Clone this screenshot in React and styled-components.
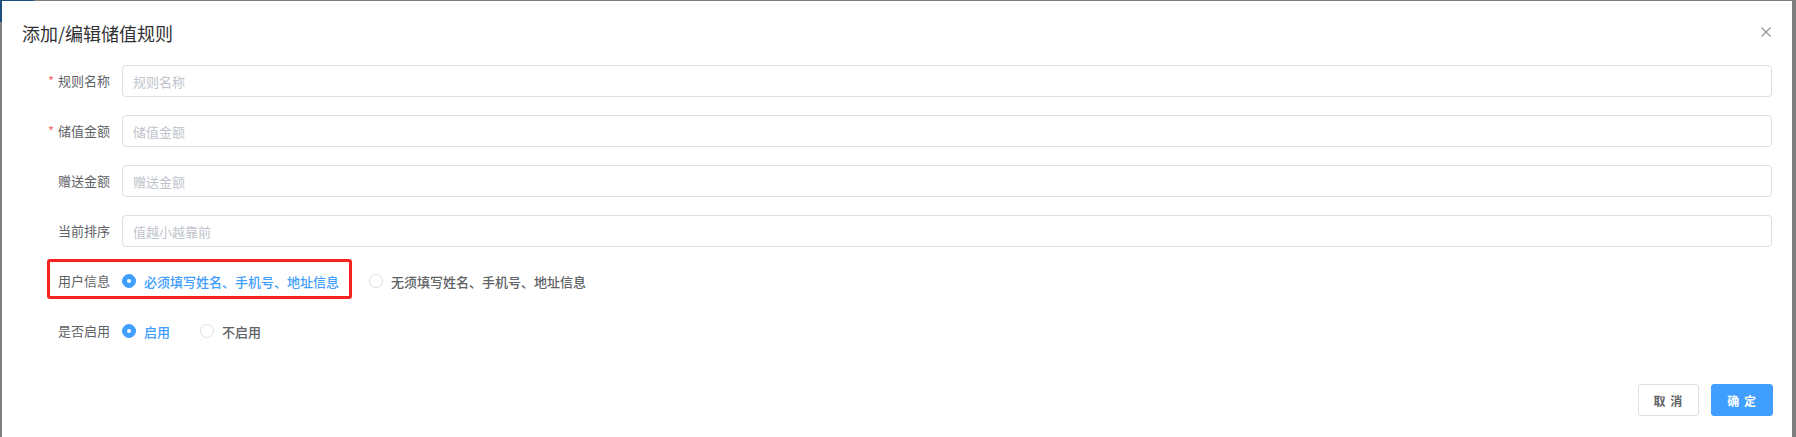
import React from "react";
import styled, { createGlobalStyle, css } from "styled-components";

const GlobalStyle = createGlobalStyle`
  html, body {
    margin: 0;
    padding: 0;
    background: #7f7f7f;
  }
  * { box-sizing: border-box; }
  body {
    font-family: "Noto Sans CJK SC", "Noto Sans", "Liberation Sans", sans-serif;
  }
`;

const FONT = `"Noto Sans CJK SC", "Noto Sans", "Liberation Sans", sans-serif`;

const Page = styled.div`
  position: relative;
  width: 1796px;
  height: 437px;
  overflow: hidden;
  background: #7f7f7f;
  padding: 1px 4px 0 2px;
  display: flex;
  flex-direction: column;
`;

const BehindPatch = styled.div`
  position: absolute;
  left: 0;
  top: 0;
  width: 34px;
  height: 22px;
  background: #1f4f7d;
`;

const Dialog = styled.div`
  position: relative;
  flex: 1;
  background: #ffffff;
  display: flex;
  flex-direction: column;
  font-family: ${FONT};
`;

const Header = styled.div`
  display: flex;
  align-items: center;
  justify-content: space-between;
  padding: 20px 21px 10px 20px;
`;

const Title = styled.span`
  font-size: 18px;
  line-height: 24px;
  color: #303133;
`;

const CloseButton = styled.button`
  display: flex;
  align-items: center;
  justify-content: center;
  width: 10px;
  height: 10px;
  padding: 0;
  margin-top: -2px;
  border: none;
  background: transparent;
  cursor: pointer;
`;

const Body = styled.div`
  padding: 10px 20px 9px 20px;
`;

const FormItem = styled.div`
  position: relative;
  display: flex;
  align-items: center;
  height: 32px;
  margin-bottom: 18px;
`;

const Label = styled.label`
  width: 100px;
  flex: 0 0 100px;
  padding-right: 12px;
  display: flex;
  justify-content: flex-end;
  align-items: center;
  font-size: 13px;
  line-height: 32px;
  color: #606266;
`;

const Star = styled.span`
  color: #f56c6c;
  margin-right: 4px;
`;

const Input = styled.input`
  flex: 1;
  height: 32px;
  border: 1px solid #dcdfe6;
  border-radius: 4px;
  padding: 0 10px;
  font-family: ${FONT};
  font-size: 13px;
  color: #606266;
  outline: none;
  background: #fff;
  &::placeholder {
    color: #c0c4cc;
  }
`;

const RadioGroup = styled.div`
  display: flex;
  align-items: center;
`;

const Radio = styled.label`
  display: flex;
  align-items: center;
  margin-right: 30px;
  cursor: pointer;
`;

const RadioCircle = styled.span`
  position: relative;
  width: 14px;
  height: 14px;
  border-radius: 50%;
  border: 1px solid #dcdfe6;
  background: #fff;
  ${(p) =>
    p.$checked &&
    css`
      border-color: #409eff;
      background: #409eff;
      &::after {
        content: "";
        position: absolute;
        left: 50%;
        top: 50%;
        width: 4px;
        height: 4px;
        border-radius: 50%;
        background: #fff;
        transform: translate(-50%, -50%);
      }
    `}
`;

const RadioText = styled.span`
  padding-left: 8px;
  font-size: 13px;
  font-weight: 500;
  color: ${(p) => (p.$checked ? "#409eff" : "#606266")};
`;

const Highlight = styled.div`
  position: absolute;
  left: 25px;
  top: -6px;
  width: 305px;
  height: 40px;
  border: 3px solid #f5231f;
  border-radius: 3px;
  pointer-events: none;
`;

const Footer = styled.div`
  display: flex;
  justify-content: flex-end;
  gap: 12px;
  padding: 10px 19px 20px 20px;
`;

const Button = styled.button`
  height: 32px;
  padding: 0 15px;
  border-radius: 3px;
  font-family: ${FONT};
  font-size: 12px;
  font-weight: 700;
  letter-spacing: 1px;
  cursor: pointer;
  border: 1px solid ${(p) => (p.$primary ? "#409eff" : "#dcdfe6")};
  background: ${(p) => (p.$primary ? "#409eff" : "#fff")};
  color: ${(p) => (p.$primary ? "#fff" : "#606266")};
`;

const CloseIcon = () => (
  <svg width="10" height="10" viewBox="0 0 10 10">
    <path d="M0.5 0.5 L9.5 9.5 M9.5 0.5 L0.5 9.5" stroke="#909399" strokeWidth="1.2" fill="none" />
  </svg>
);

const inputs = [
  { label: "规则名称", placeholder: "规则名称", required: true },
  { label: "储值金额", placeholder: "储值金额", required: true },
  { label: "赠送金额", placeholder: "赠送金额" },
  { label: "当前排序", placeholder: "值越小越靠前" },
];

const RadioOption = ({ checked, children }) => (
  <Radio>
    <RadioCircle $checked={checked} />
    <RadioText $checked={checked}>{children}</RadioText>
  </Radio>
);

export default function App() {
  return (
    <>
      <GlobalStyle />
      <Page>
        <BehindPatch />
        <Dialog>
          <Header>
            <Title>添加/编辑储值规则</Title>
            <CloseButton aria-label="关闭">
              <CloseIcon />
            </CloseButton>
          </Header>
          <Body>
            {inputs.map((f) => (
              <FormItem key={f.label}>
                <Label>
                  {f.required && <Star>*</Star>}
                  {f.label}
                </Label>
                <Input placeholder={f.placeholder} />
              </FormItem>
            ))}
            <FormItem>
              <Highlight />
              <Label>用户信息</Label>
              <RadioGroup>
                <RadioOption checked>必须填写姓名、手机号、地址信息</RadioOption>
                <RadioOption>无须填写姓名、手机号、地址信息</RadioOption>
              </RadioGroup>
            </FormItem>
            <FormItem>
              <Label>是否启用</Label>
              <RadioGroup>
                <RadioOption checked>启用</RadioOption>
                <RadioOption>不启用</RadioOption>
              </RadioGroup>
            </FormItem>
          </Body>
          <Footer>
            <Button>取 消</Button>
            <Button $primary>确 定</Button>
          </Footer>
        </Dialog>
      </Page>
    </>
  );
}
